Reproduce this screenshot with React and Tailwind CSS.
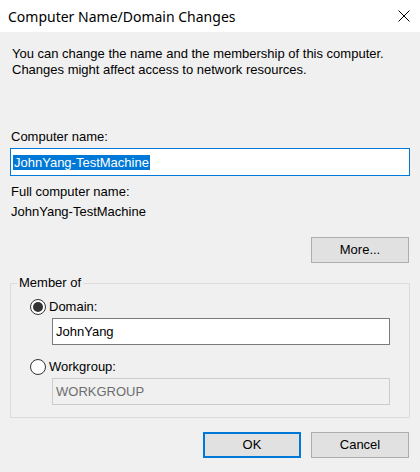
import React from 'react';

const sans = { fontFamily: '"Liberation Sans", Arial, sans-serif' };

const Radio = ({ checked, label }) => (
  <div className="flex items-center h-[17px] ml-[19px]">
    <span className="w-[16px] h-[16px] rounded-full border border-[#333] bg-white flex items-center justify-center">
      {checked && <span className="w-[10px] h-[10px] rounded-full bg-[#333]" />}
    </span>
    <span className="ml-[3px] text-[13px] leading-[16px] text-black">{label}</span>
  </div>
);

const Button = ({ children, primary }) => (
  <button
    className={
      primary
        ? 'w-[98px] h-[26px] bg-[#e1e1e1] border-2 border-[#0078d7] text-[13px] text-black'
        : 'w-[98px] h-[26px] bg-[#e1e1e1] border border-[#adadad] text-[13px] text-black'
    }
  >
    {children}
  </button>
);

export default function App() {
  return (
    <div className="w-[420px] h-[472px] bg-[#f0f0f0] flex flex-col" style={sans}>
      {/* title bar */}
      <div className="h-[32px] bg-white flex items-center justify-between pl-[8px] pr-[10px]">
        <span className="text-[14px] text-black" style={{ fontFamily: '"Noto Sans", "Open Sans", sans-serif' }}>
          Computer Name/Domain Changes
        </span>
        <svg width="12" height="12" viewBox="0 0 12 12" className="mb-[1px]">
          <path d="M0.5 0.5 L11.5 11.5 M11.5 0.5 L0.5 11.5" stroke="#000" strokeWidth="1" />
        </svg>
      </div>

      <div className="px-[10px] pt-[14px] text-[13px] leading-[16px] text-black">
        <p className="pl-[2px]">
          You can change the name and the membership of this computer.
          <br />
          Changes might affect access to network resources.
        </p>

        <div className="mt-[51px] pl-[1px]">Computer name:</div>
        <div className="mt-[3px] h-[28px] bg-white border border-[#0078d7] flex items-center pl-[2px]">
          <span className="bg-[#0078d7] text-white leading-[15px] pr-[1px] pl-[1px]">JohnYang-TestMachine</span>
        </div>

        <div className="mt-[8px] pl-[1px]">Full computer name:</div>
        <div className="mt-[4px] pl-[1px]">JohnYang-TestMachine</div>

        <div className="mt-[17px] flex justify-end pr-[1px]">
          <Button>More...</Button>
        </div>

        <fieldset className="mt-[12px] border border-[#dcdcdc] pb-[12px]">
          <legend className="ml-[6px] px-[2px] leading-[16px]">Member of</legend>
          <div className="mt-[7px]">
            <Radio checked label="Domain:" />
          </div>
          <div className="mt-[3px] ml-[41px] mr-[19px] h-[27px] bg-white border border-[#7a7a7a] flex items-center pl-[3px]">
            JohnYang
          </div>
          <div className="mt-[13px]">
            <Radio label="Workgroup:" />
          </div>
          <div className="mt-[3px] ml-[41px] mr-[19px] h-[27px] bg-[#f0f0f0] border border-[#cccccc] flex items-center pl-[3px] text-[#6d6d6d]">
            WORKGROUP
          </div>
        </fieldset>

        <div className="mt-[14px] flex justify-end gap-[10px] pr-[1px]">
          <Button primary>OK</Button>
          <Button>Cancel</Button>
        </div>
      </div>
    </div>
  );
}
